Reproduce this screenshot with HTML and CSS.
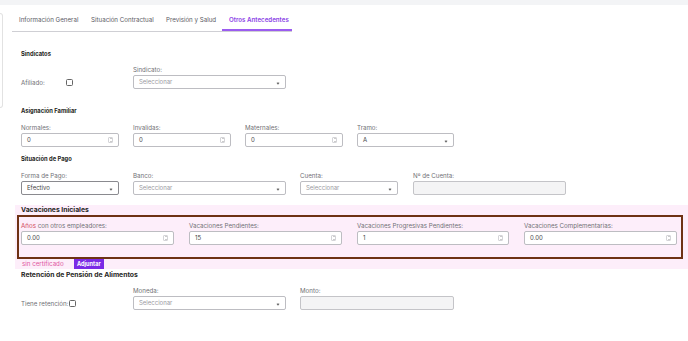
FILE: index.html
```html
<!DOCTYPE html>
<html lang="es">
<head>
<meta charset="utf-8">
<link rel="stylesheet" href="styles.css">
</head>
<body>
<div class="topbar"></div>
<div class="layout">
  <div class="side-stub"></div>
  <div class="main">
    <nav class="tabs">
      <span class="tab">Información General</span>
      <span class="tab">Situación Contractual</span>
      <span class="tab">Previsión y Salud</span>
      <span class="tab active">Otros Antecedentes</span>
    </nav>

    <section class="sec">
      <h3 class="title t1">Sindicatos</h3>
      <div class="row row-sind">
        <div class="check-group w112">
          <span class="lbl-inline">Afiliado:</span>
          <span class="checkbox cb-afil"></span>
        </div>
        <div class="field w153">
          <label class="lbl">Sindicato:</label>
          <div class="ctrl select placeholder">Seleccionar<span class="caret"></span></div>
        </div>
      </div>
    </section>

    <section class="sec">
      <h3 class="title t2">Asignación Familiar</h3>
      <div class="row gap14">
        <div class="field w98"><label class="lbl">Normales:</label><div class="ctrl num">0<span class="spin"></span></div></div>
        <div class="field w98"><label class="lbl">Invalidas:</label><div class="ctrl num">0<span class="spin"></span></div></div>
        <div class="field w98"><label class="lbl">Maternales:</label><div class="ctrl num">0<span class="spin"></span></div></div>
        <div class="field w97"><label class="lbl">Tramo:</label><div class="ctrl select">A<span class="caret"></span></div></div>
      </div>
    </section>

    <section class="sec">
      <h3 class="title t3">Situación de Pago</h3>
      <div class="row gap14">
        <div class="field w98"><label class="lbl">Forma de Pago:</label><div class="ctrl select dark">Efectivo<span class="caret"></span></div></div>
        <div class="field w153"><label class="lbl">Banco:</label><div class="ctrl select placeholder">Seleccionar<span class="caret"></span></div></div>
        <div class="field w98"><label class="lbl">Cuenta:</label><div class="ctrl select placeholder">Seleccionar<span class="caret"></span></div></div>
        <div class="field w153 ml1"><label class="lbl">Nº de Cuenta:</label><div class="ctrl disabled"></div></div>
      </div>
    </section>

    <section class="vac">
      <h3 class="title vac-title">Vacaciones Iniciales</h3>
      <div class="vac-box">
        <div class="field w153"><label class="lbl"><span class="red">Años</span> con otros empleadores:</label><div class="ctrl num">0.00<span class="spin"></span></div></div>
        <div class="field w153"><label class="lbl">Vacaciones Pendientes:</label><div class="ctrl num">15<span class="spin"></span></div></div>
        <div class="field w152"><label class="lbl">Vacaciones Progresivas Pendientes:</label><div class="ctrl num">1<span class="spin"></span></div></div>
        <div class="field w153"><label class="lbl">Vacaciones Complementarias:</label><div class="ctrl num">0.00<span class="spin"></span></div></div>
      </div>
      <div class="cert-row">
        <span class="cert">sin certificado</span>
        <span class="btn">Adjuntar</span>
      </div>
    </section>

    <section class="sec">
      <h3 class="title t4">Retención de Pensión de Alimentos</h3>
      <div class="row row-ret">
        <div class="check-group w112">
          <span class="lbl-inline">Tiene retención:</span>
          <span class="checkbox cb-ret"></span>
        </div>
        <div class="field w153"><label class="lbl">Moneda:</label><div class="ctrl select placeholder">Seleccionar<span class="caret"></span></div></div>
        <div class="field w154 ml14"><label class="lbl">Monto:</label><div class="ctrl disabled"></div></div>
      </div>
    </section>
  </div>
</div>
</body>
</html>
```

FILE: styles.css
```css
* { box-sizing: border-box; }
html, body { margin: 0; padding: 0; background: #fff; }
body {
  font-family: Inter, "Noto Sans", "Liberation Sans", sans-serif;
  color: #555;
  font-size: 6px;
  width: 688px;
  height: 341px;
  overflow: hidden;
}
.topbar { height: 5px; background: #f3f4f6; }
.layout { display: flex; }
.side-stub {
  width: 3px;
  height: 95px;
  margin-top: 8px;
  border: 1px solid #e2e2e2;
  border-left: none;
  border-radius: 0 3px 3px 0;
  flex: none;
}
.main { margin-left: 9px; flex: 1; }

.tabs {
  display: flex;
  width: 280px;
  height: 27px;
  padding-top: 10px;
  border-bottom: 1px solid #cfcfd4;
  font-size: 6.2px;
}
.tab { color: #5b5b66; height: 16px; line-height: 10px; }
.tab:nth-child(1) { padding-left: 7px; width: 79px; }
.tab:nth-child(2) { width: 75px; }
.tab:nth-child(3) { width: 56px; }
.tab.active {
  color: #8b3fe6;
  font-weight: 600;
  width: 70px;
  padding-left: 7px;
  border-bottom: 2px solid #9b5cf0;
}

.sec { padding-left: 9px; }
.title { margin: 0; font-weight: 700; color: #1f1f24; font-size: 5.8px; line-height: 8px; }
.t1 { margin-top: 18px; }
.t2 { margin-top: 18px; }
.t3 { margin-top: 8px; }
.t4 { margin-top: 2px; font-size: 6.8px; }

.row { display: flex; align-items: flex-end; }
.gap14 { gap: 14px; margin-top: 9px; }
.row-sind { margin-top: 8px; }
.row-ret { margin-top: 8px; }

.field { display: flex; flex-direction: column; flex: none; }
.w97 { width: 97px; }
.w98 { width: 98px; }
.w112 { width: 112px; flex: none; }
.w152 { width: 152px; }
.w153 { width: 153px; }
.w154 { width: 154px; }
.ml1 { margin-left: 1px; }
.ml14 { margin-left: 14px; }

.lbl { font-size: 6.2px; line-height: 7px; color: #707076; height: 9px; }
.lbl .red { color: #d14a5a; }
.lbl-inline { font-size: 6.2px; color: #707076; }

.check-group { display: flex; align-items: center; height: 14px; }
.cb-afil { margin-left: 21px; }
.cb-ret { margin-left: 1px; }
.checkbox {
  width: 7px; height: 7px;
  border: 1px solid #666;
  border-radius: 1.5px;
  background: #fff;
}

.ctrl {
  position: relative;
  height: 14px;
  border: 1px solid #bdbdc2;
  border-radius: 2px;
  background: #fff;
  font-size: 6px;
  line-height: 12px;
  padding-left: 5px;
  color: #444;
}
.ctrl.dark { border-color: #8a8a8f; }
.ctrl.placeholder { color: #9a9aa2; }
.ctrl.disabled { background: #f4f4f5; border-color: #c4c4c8; }
.caret {
  position: absolute;
  right: 6px; top: 6px;
  width: 2px; height: 2px;
  border-right: 1px solid #666;
  border-bottom: 1px solid #666;
  transform: rotate(45deg);
}
.spin {
  position: absolute;
  right: 5px; top: 3px;
  width: 5px; height: 6px;
  border: 1px solid #d4d4d8;
  border-radius: 1px;
}
.spin::before, .spin::after {
  content: "";
  position: absolute;
  left: 1px;
  width: 0; height: 0;
  border-left: 1px solid transparent;
  border-right: 1px solid transparent;
}
.spin::before { top: 0; border-bottom: 1px solid #999; }
.spin::after { bottom: 0; border-top: 1px solid #999; }

.vac {
  margin-top: 10px;
  margin-left: 3px;
  background: #fdeefa;
  padding-top: 1px;
  height: 64px;
}
.vac-title { padding-left: 6px; font-size: 6.8px; line-height: 8px; margin-top: 0; }
.vac-box {
  margin-top: 1px;
  margin-left: 2px;
  width: 666px;
  height: 44px;
  border: 2px solid #6e3214;
  padding: 5px 4px 0 2px;
  display: flex;
  gap: 15px;
}
.vac-box .lbl { height: 9px; }
.cert-row { display: flex; align-items: center; height: 11px; margin-top: -1px; padding-left: 7px; }
.cert { color: #e0559e; font-size: 6.2px; width: 52px; }
.btn {
  background: #7a2ae6;
  color: #fff;
  font-weight: 700;
  font-size: 5.6px;
  height: 10px;
  line-height: 10px;
  padding: 0 3px;
}
```
